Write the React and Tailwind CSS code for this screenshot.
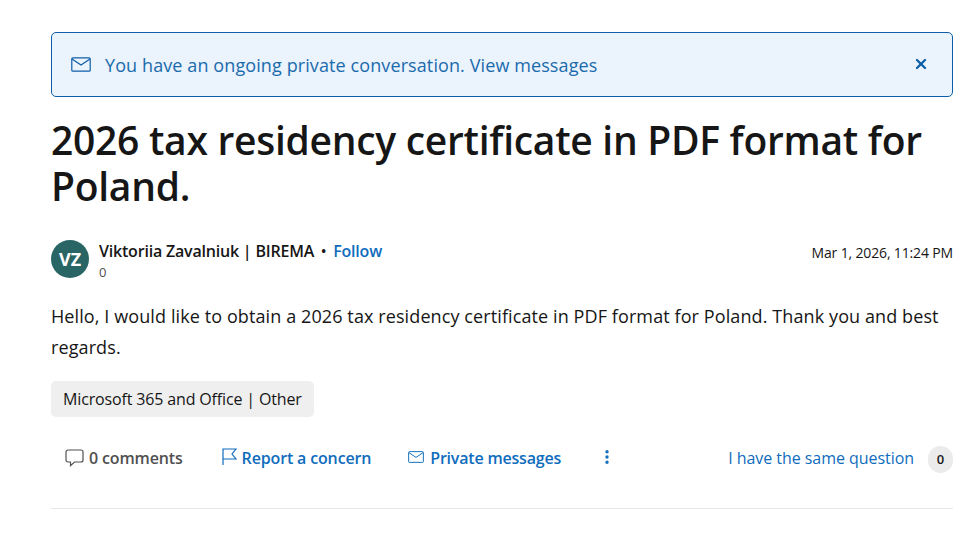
import { X, MoreVertical } from "lucide-react";

const font = { fontFamily: '"Open Sans", "Noto Sans", sans-serif' };

function MailIcon({ className }) {
  return (
    <svg viewBox="0 0 20 15" fill="none" stroke="currentColor" strokeWidth="1.2" className={className}>
      <rect x="0.8" y="0.8" width="18.4" height="13.4" rx="1" />
      <path d="M1 2l9 6 9-6" />
    </svg>
  );
}

function CommentIcon() {
  return (
    <svg viewBox="0 0 19 18" fill="none" stroke="currentColor" strokeWidth="1.2" className="w-[19px] h-[18px] -mt-[1px]">
      <path d="M3 1h13a2 2 0 0 1 2 2v8a2 2 0 0 1-2 2H9.5l-4 3.6V13H3a2 2 0 0 1-2-2V3a2 2 0 0 1 2-2z" />
    </svg>
  );
}

function FlagIcon() {
  return (
    <svg viewBox="0 0 15 18" fill="none" stroke="currentColor" strokeWidth="1.2" className="w-[15px] h-[18px] -mt-[3px]">
      <path d="M1 17V1h13l-4 5 4 5H1" />
    </svg>
  );
}

export default function App() {
  return (
    <div className="min-h-[534px] bg-white pl-[51px] pr-[26px] pt-[32px] text-[#161616]" style={font}>
      <div className="flex items-center h-[65px] rounded-[5px] border border-[#0f5fa8] bg-[#ebf3fc] pl-[19px] pr-[23px] text-[#0f6cbd]">
        <MailIcon className="w-[20px] h-[15px] text-[#0f5fa8]" />
        <p className="ml-[14px] pt-[1px] text-[18px] tracking-[0.1px] text-[#1a6bad]">
          You have an ongoing private conversation. View messages
        </p>
        <button className="ml-auto -mt-[1px] text-[#0f5fa8]">
          <X size={16} strokeWidth={3.5} />
        </button>
      </div>

      <h1 className="mt-[20px] text-[39px] leading-[46px] font-semibold tracking-[-0.28px]">
        2026 tax residency certificate in PDF format for Poland.
      </h1>

      <div className="mt-[31px] flex items-start h-[42px]">
        <div className="flex items-center justify-center w-[38px] h-[38px] rounded-full bg-[#2a6565] text-white text-[18px] font-bold">
          VZ
        </div>
        <div className="ml-[10px]">
          <div className="flex items-center text-[16px] leading-[22px] font-semibold tracking-[-0.2px]">
            <span>Viktoriia Zavalniuk | BIREMA</span>
            <span className="mx-[7px] text-[14px]">•</span>
            <a className="text-[#0f6cbd]">Follow</a>
          </div>
          <div className="text-[13px] leading-[20px] text-[#505050]">0</div>
        </div>
        <div className="ml-auto mt-[3px] text-[14px] leading-[20px] tracking-[-0.15px]">Mar 1, 2026, 11:24 PM</div>
      </div>

      <p className="mt-[19px] text-[18px] leading-[31px] tracking-[0.1px]">
        Hello, I would like to obtain a 2026 tax residency certificate in PDF format for Poland. Thank you and best regards.
      </p>

      <div className="mt-[18px] flex w-fit items-center h-[36px] px-[12px] rounded-[5px] bg-[#efefef] text-[16px] tracking-[-0.15px]">
        Microsoft 365 and Office | Other
      </div>

      <div className="mt-[25px] flex items-center h-[32px] pl-[14px] text-[16px] font-semibold tracking-[-0.15px]">
        <div className="flex items-center gap-[5px] text-[#505050]">
          <CommentIcon />
          <span>0 comments</span>
        </div>
        <div className="ml-[39px] flex items-center gap-[5px] text-[#0f6cbd]">
          <FlagIcon />
          <span>Report a concern</span>
        </div>
        <div className="ml-[37px] flex items-center gap-[6px] text-[#0f6cbd]">
          <MailIcon className="w-[16px] h-[12px] -mt-[3px]" />
          <span className="tracking-[-0.2px]">Private messages</span>
        </div>
        <MoreVertical size={18} strokeWidth={2.5} className="ml-[37px] -mt-[2px] text-[#0f6cbd]" />
        <a className="ml-auto text-[#0f6cbd] font-normal tracking-[-0.05px]">I have the same question</a>
        <span className="ml-[14px] mt-[3px] flex items-center justify-center w-[25px] h-[27px] rounded-full bg-[#ebebeb] text-[13px] font-semibold text-[#161616]">
          0
        </span>
      </div>

      <div className="mt-[34px] border-t border-[#e6e6e6]" />
    </div>
  );
}
